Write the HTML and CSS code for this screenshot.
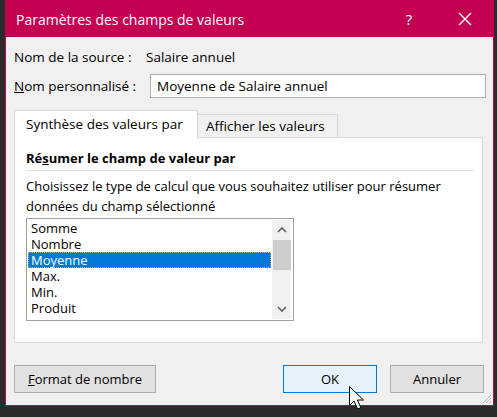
FILE: index.html
```html
<!DOCTYPE html>
<html lang="fr">
<head>
<meta charset="utf-8">
<title>Paramètres des champs de valeurs</title>
<link rel="stylesheet" href="styles.css">
</head>
<body>
<div class="desk">
  <div class="dialog">
    <div class="titlebar">
      <span class="title">Paramètres des champs de valeurs</span>
      <span class="help">?</span>
      <span class="close"><svg width="14" height="14" viewBox="0 0 14 14"><path d="M1 1 L13 13 M13 1 L1 13" stroke="#fff" stroke-width="1.4" fill="none"/></svg></span>
    </div>
    <div class="body">
      <div class="row src"><span class="lbl">Nom de la source :</span><span class="val">Salaire annuel</span></div>
      <div class="row custom"><span class="lbl2"><u>N</u>om personnalisé :</span><div class="input">Moyenne de Salaire annuel</div></div>
      <div class="tabs">
        <div class="tab active">Synthèse des valeurs par</div>
        <div class="tab">Afficher les valeurs</div>
      </div>
      <div class="panel">
        <div class="section">Ré<u>s</u>umer le champ de valeur par</div>
        <div class="sep"></div>
        <p class="desc">Choisissez le type de calcul que vous souhaitez utiliser pour résumer<br>données du champ sélectionné</p>
        <div class="listbox">
          <ul class="items">
            <li>Somme</li>
            <li>Nombre</li>
            <li class="sel">Moyenne</li>
            <li>Max.</li>
            <li>Min.</li>
            <li>Produit</li>
          </ul>
          <div class="scroll">
            <svg class="arr" width="10" height="8" viewBox="0 0 10 8"><path d="M1 6 L5 2 L9 6" stroke="#606060" stroke-width="1.6" fill="none"/></svg>
            <div class="thumb"></div>
            <div class="track"></div>
            <svg class="arr" width="10" height="8" viewBox="0 0 10 8"><path d="M1 2 L5 6 L9 2" stroke="#606060" stroke-width="1.6" fill="none"/></svg>
          </div>
        </div>
      </div>
      <div class="buttons">
        <button class="btn fmt"><u>F</u>ormat de nombre</button>
        <div class="right">
          <button class="btn ok">OK</button>
          <button class="btn">Annuler</button>
        </div>
      </div>
    </div>
    <svg class="grip" width="10" height="10" viewBox="0 0 10 10"><path d="M9 1 L1 9 M9 4 L4 9 M9 7 L7 9" stroke="#b8b8b8" stroke-width="1" fill="none"/></svg>
  </div>
  <svg class="cursor" width="17" height="25" viewBox="0 0 17 25"><path d="M0.5 0.5 V19.5 L5 15 L8.5 23 L11.8 21.6 L8.4 14 H14.5 Z" fill="#fff" stroke="#000" stroke-width="1" stroke-linejoin="round"/></svg>
</div>
</body>
</html>
```
FILE: styles.css
```css
* { box-sizing: border-box; }
html, body { margin: 0; padding: 0; }
body {
  width: 497px;
  height: 417px;
  background: #2b2b2b;
  font-family: "Open Sans", "Noto Sans", sans-serif;
  font-size: 13.5px;
  color: #000;
  overflow: hidden;
}
.desk {
  position: relative;
  width: 497px;
  height: 417px;
  padding-left: 5px;
}
.dialog {
  position: relative;
  width: 489px;
  height: 406px;
  border: 1px solid #c30052;
  background: #f0f0f0;
}
.titlebar {
  height: 37px;
  background: #c30052;
  color: #fff;
  display: flex;
  align-items: center;
  padding-left: 11px;
  margin: -1px -1px 0 -1px;
}
.title {
  font-size: 14px;
  flex: 1;
  padding-top: 1px;
}
.help {
  font-size: 15px;
  width: 56px;
  text-align: center;
}
.close {
  width: 56px;
  display: flex;
  justify-content: center;
  align-items: center;
  margin-right: 1px;
}
.body {
  padding: 12px 7px 0 8px;
}
.row {
  display: flex;
  align-items: center;
}
.src { height: 16px; line-height: 16px; }
.src .lbl { width: 132px; }
.custom { margin-top: 9px; height: 24px; }
.custom .lbl2 { width: 136px; }
.input {
  flex: 1;
  height: 24px;
  border: 1px solid #adadad;
  background: #fff;
  padding-left: 6px;
  line-height: 22px;
}
.tabs {
  display: flex;
  align-items: flex-end;
  margin-top: 12px;
  height: 27px;
  position: relative;
  z-index: 2;
}
.tab {
  border: 1px solid #d9d9d9;
  border-bottom: none;
  background: #f0f0f0;
  height: 23px;
  line-height: 22px;
  padding: 0 9px 0 8px;
}
.tab.active {
  background: #fff;
  line-height: 27px;
  padding: 0 10px 0 11px;
  width: 184px;
  margin-bottom: -1px;
  height: 28px;
}
.tab + .tab { border-left: none; width: 140px; }
.panel {
  width: 469px;
  height: 206px;
  border: 1px solid #d9d9d9;
  background: #fff;
  padding: 12px 8px 0 11px;
}
.section {
  font-size: 13px;
  font-weight: bold;
  line-height: 16px;
}
.sep {
  height: 1px;
  background: #dcdcdc;
  margin-top: 4px;
}
.desc {
  font-size: 13px;
  margin: 5px 0 0 0;
  line-height: 20px;
}
.listbox {
  font-size: 13px;
  margin-top: 2px;
  width: 268px;
  height: 103px;
  border: 1px solid #a0a0a0;
  display: flex;
  padding: 1px 2px 1px 1px;
}
.items {
  list-style: none;
  margin: 0;
  padding: 0;
  flex: 1;
  overflow: hidden;
}
.items li {
  height: 16px;
  line-height: 16px;
  padding-left: 3px;
  margin-right: 1px;
}
.items li.sel {
  background: #0078d7;
  color: #fff;
  border: 1px dotted #e8a050;
  padding-left: 2px;
  line-height: 14px;
}
.scroll {
  width: 19px;
  background: #f0f0f0;
  display: flex;
  flex-direction: column;
  align-items: center;
}
.arr { margin: 6px 0; flex: none; }
.thumb {
  width: 18px;
  height: 30px;
  background: #cdcdcd;
  flex: none;
}
.track { flex: 1; }
.buttons {
  display: flex;
  justify-content: space-between;
  margin-top: 22px;
}
.right { display: flex; gap: 13px; margin-right: 2px; }
.btn {
  font-family: inherit;
  font-size: 13px;
  color: #000;
  height: 28px;
  border: 1px solid #adadad;
  background: #e1e1e1;
  padding: 0;
}
.fmt { width: 142px; }
.ok, .right .btn { width: 94px; }
.ok {
  background: #e5f1fb;
  border-color: #0078d7;
}
.grip {
  position: absolute;
  right: 1px;
  bottom: 1px;
}
.cursor {
  position: absolute;
  left: 349px;
  top: 386px;
}
```
